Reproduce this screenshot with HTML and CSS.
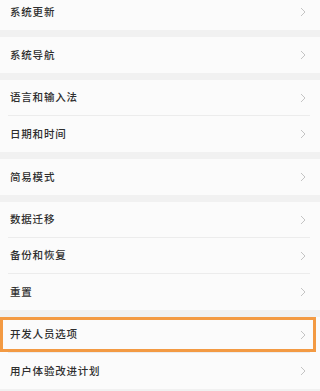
FILE: index.html
```html
<!DOCTYPE html>
<html lang="zh-CN">
<head>
<meta charset="utf-8">
<title>设置</title>
<link rel="stylesheet" href="styles.css">
</head>
<body>
<div class="list">
  <div class="group">
    <div class="row"><div class="inner"><span class="label">系统更新</span><svg class="chev" viewBox="0 0 6 10"><path d="M1 1 L5 5 L1 9"/></svg></div></div>
  </div>
  <div class="group">
    <div class="row"><div class="inner"><span class="label">系统导航</span><svg class="chev" viewBox="0 0 6 10"><path d="M1 1 L5 5 L1 9"/></svg></div></div>
  </div>
  <div class="group">
    <div class="row"><div class="inner"><span class="label">语言和输入法</span><svg class="chev" viewBox="0 0 6 10"><path d="M1 1 L5 5 L1 9"/></svg></div></div>
    <div class="row"><div class="inner"><span class="label">日期和时间</span><svg class="chev" viewBox="0 0 6 10"><path d="M1 1 L5 5 L1 9"/></svg></div></div>
  </div>
  <div class="group">
    <div class="row"><div class="inner"><span class="label">简易模式</span><svg class="chev" viewBox="0 0 6 10"><path d="M1 1 L5 5 L1 9"/></svg></div></div>
  </div>
  <div class="group">
    <div class="row"><div class="inner"><span class="label">数据迁移</span><svg class="chev" viewBox="0 0 6 10"><path d="M1 1 L5 5 L1 9"/></svg></div></div>
    <div class="row"><div class="inner"><span class="label">备份和恢复</span><svg class="chev" viewBox="0 0 6 10"><path d="M1 1 L5 5 L1 9"/></svg></div></div>
    <div class="row"><div class="inner"><span class="label">重置</span><svg class="chev" viewBox="0 0 6 10"><path d="M1 1 L5 5 L1 9"/></svg></div></div>
  </div>
  <div class="group">
    <div class="row highlight"><div class="inner"><span class="label">开发人员选项</span><svg class="chev" viewBox="0 0 6 10"><path d="M1 1 L5 5 L1 9"/></svg></div></div>
    <div class="row"><div class="inner"><span class="label">用户体验改进计划</span><svg class="chev" viewBox="0 0 6 10"><path d="M1 1 L5 5 L1 9"/></svg></div></div>
  </div>
</div>
</body>
</html>
```

FILE: styles.css
```css
html, body {
  margin: 0;
  padding: 0;
  background: #f1f1f1;
  overflow: hidden;
}

.list {
  display: flex;
  flex-direction: column;
  gap: 7px;
  margin-top: -6px;
}

.group {
  display: flex;
  flex-direction: column;
  background: #fbfbfb;
}

.row {
  position: relative;
  padding: 0 10px 0 8px;
}

.inner {
  display: flex;
  align-items: center;
  justify-content: space-between;
  height: 35px;
  padding: 0 4px 0 2px;
  border-bottom: 1px solid #ececec;
}

.row:last-child .inner {
  height: 36px;
  border-bottom: none;
}

.label {
  font-family: "Noto Sans CJK SC", "Noto Sans", sans-serif;
  font-size: 10.5px;
  font-weight: 500;
  letter-spacing: 0.8px;
  color: #2e2e2e;
  line-height: 1;
}

.chev {
  width: 6px;
  height: 10px;
  fill: none;
  stroke: #c4c4c4;
  stroke-width: 1;
}

.highlight::after {
  content: "";
  position: absolute;
  top: 0;
  left: 0;
  right: 4px;
  bottom: 1px;
  border: 3.5px solid #f39a43;
  pointer-events: none;
}
```
